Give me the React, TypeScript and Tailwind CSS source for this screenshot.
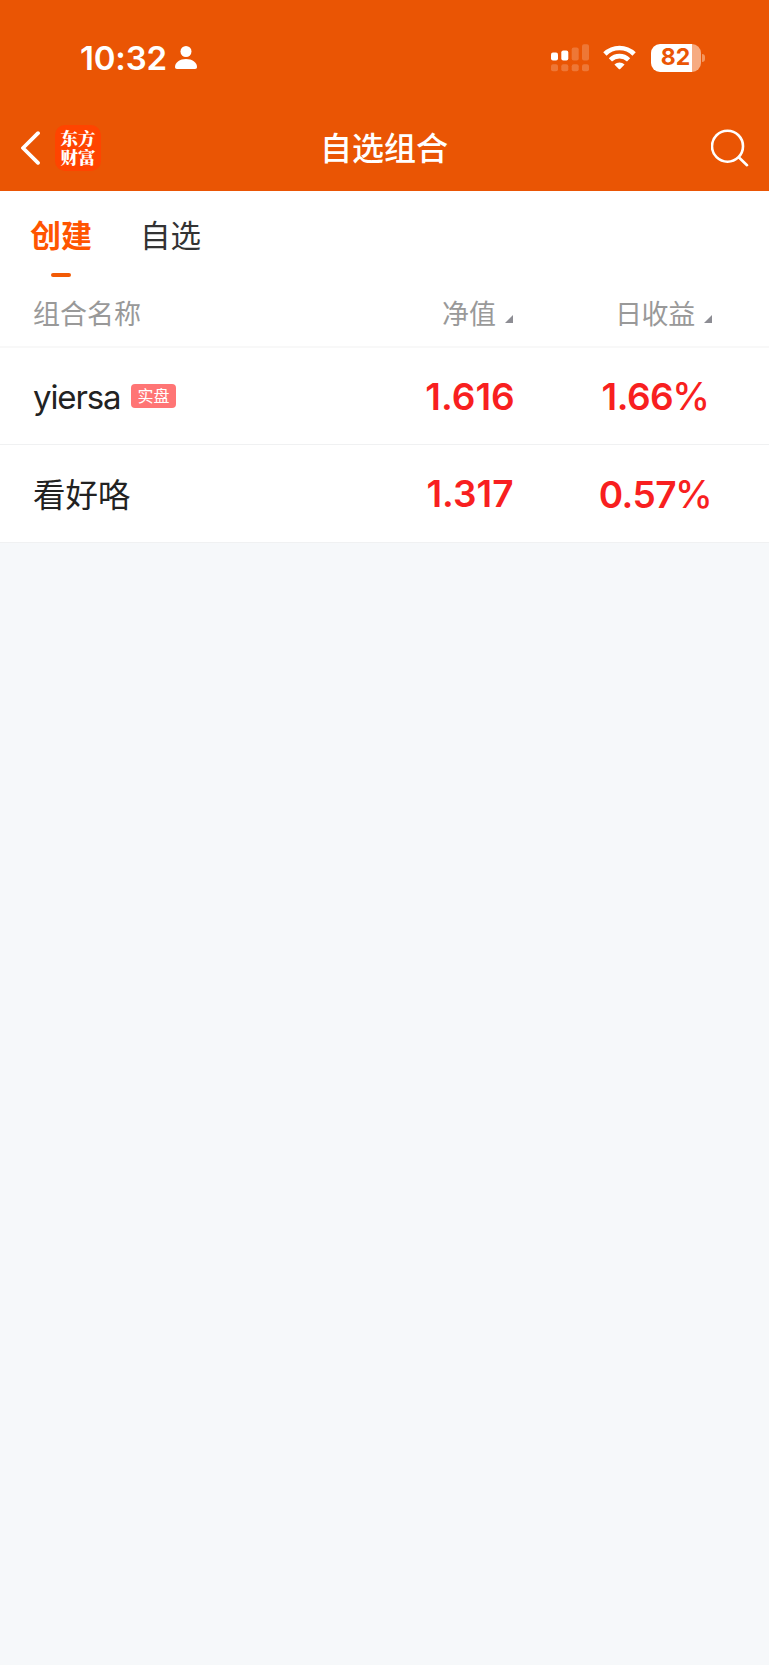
import React from 'react';

const portfolios = [
  { id: '1', name: 'yiersa', live: true, netValue: '1.616', dailyReturn: '1.66' },
  { id: '2', name: '看好咯', live: false, netValue: '1.317', dailyReturn: '0.57' },
];

function StatusBar() {
  return (
    <div className="flex h-[105px] items-center justify-between pt-[10px] pr-[64px] pl-[80px]">
      <div className="flex items-center">
        <span className="w-[95px] pt-px text-[33px] leading-none font-semibold tracking-[-0.2px] whitespace-nowrap">10:32</span>
        <svg width="22" height="24" viewBox="0 0 22 24" fill="currentColor">
          <circle cx="11" cy="5.500" r="5.500" />
          <path d="M0 21C0 16.500 5 13.100 11 13.100S22 16.500 22 21c0 1.300-.7 2-2 2H2c-1.300 0-2-.7-2-2Z" />
        </svg>
      </div>

      <div className="flex items-center">
        {/* Dual SIM signal */}
        <svg width="38" height="28" viewBox="0 0 38 28" fill="currentColor">
          <rect x="0" y="8.500" width="7" height="8" rx="2" />
          <rect x="10.300" y="6.500" width="7" height="10" rx="2" />
          <g opacity="0.2">
            <rect x="20.700" y="3.500" width="7" height="13" rx="2" />
            <rect x="31" y="0.200" width="7" height="16.300" rx="2" />
            <rect x="0" y="20.200" width="7" height="7" rx="2" />
            <rect x="10.300" y="20.200" width="7" height="7" rx="2" />
            <rect x="20.700" y="20.200" width="7" height="7" rx="2" />
            <rect x="31" y="20.200" width="7" height="7" rx="2" />
          </g>
        </svg>

        <svg className="ml-[14px]" width="33" height="25" viewBox="0 0 33 25" fill="none">
          <path d="M1.900 9C10 1 23 1 31.100 9" stroke="currentColor" strokeWidth="4.700" />
          <path d="M7.400 14.900c5.200-5.100 13-5.100 18.200 0" stroke="currentColor" strokeWidth="4.600" />
          <path d="M11.400 19.600c2.900-2.900 7.300-2.900 10.200 0l-4.400 4.300c-.5.500-.9.500-1.400 0Z" fill="currentColor" />
        </svg>

        {/* Battery */}
        <div className="ml-[15px] flex items-center gap-[1px]">
          <div className="flex h-[28px] w-[50px] items-center justify-center rounded-[9px] bg-[linear-gradient(90deg,#fff_41px,#f6ab81_41px)] pr-px">
            <span className="text-[23px] leading-none font-bold text-[#ea5504]">82</span>
          </div>
          <div className="h-[8px] w-[3px] rounded-r-full bg-[#f3965f]" />
        </div>
      </div>
    </div>
  );
}

function NavBar() {
  return (
    <div className="grid h-[86px] grid-cols-[1fr_auto_1fr] items-center pr-[20px] pl-[21px]">
      <div className="flex items-center">
        <svg width="20" height="34" viewBox="0 0 20 34" fill="none" stroke="currentColor" strokeWidth="3.800" strokeLinecap="round" strokeLinejoin="round">
          <path d="M17 2.200 2 17l15 14.800" />
        </svg>
        <div className="ml-[14px] flex h-[46px] w-[46px] items-center justify-center rounded-[10px] bg-[#ff4400] pb-[2px] font-['Noto_Serif_CJK_SC','Noto_Sans_CJK_SC',serif] text-[17.500px] leading-[19px] font-black">
          <p className="w-[35px] text-center">东方财富</p>
        </div>
      </div>
      <h1 className="relative -left-px pt-[2px] text-[32px] leading-none font-medium">自选组合</h1>
      <svg className="justify-self-end" width="38" height="38" viewBox="0 0 38 38" fill="none" stroke="currentColor" strokeWidth="2.600" strokeLinecap="round">
        <circle cx="16.500" cy="17.200" r="15.500" />
        <path d="m28 28.500 8 7.700" />
      </svg>
    </div>
  );
}

function SortMark() {
  return (
    <svg className="mb-[5px]" width="8" height="8" viewBox="0 0 8 8" fill="#8d8d94">
      <path d="M8 0v8H0Z" />
    </svg>
  );
}

export default function App() {
  return (
    <div className="min-h-[1665px] bg-[#f6f8fa] font-['Inter','Noto_Sans_CJK_SC',sans-serif] text-[#222]">
      <header className="bg-[#ea5504] text-white">
        <StatusBar />
        <NavBar />
      </header>

      <main className="bg-white">
        {/* Tabs */}
        <div className="flex h-[88px] gap-[48px] pt-[29px] pl-[30px] text-[31px] leading-[32px]">
          <div className="flex flex-col items-center font-bold text-[#ff5500]">
            <span>创建</span>
            <span className="mt-[21px] h-[4px] w-[20px] rounded-full bg-[#f25a05]" />
          </div>
          <span className="text-[30.500px] text-[#333]">自选</span>
        </div>

        {/* Column titles */}
        <div className="flex h-[69px] items-center border-b-2 border-[#f8f8f8] pt-[4px] text-[27px] leading-none text-[#999]">
          <span className="flex-1 pl-[33px]">组合名称</span>
          <div className="flex w-[170px] items-end justify-end gap-[9px]">
            <span>净值</span>
            <SortMark />
          </div>
          <div className="mr-[57px] flex w-[199px] items-end justify-end gap-[9px]">
            <span className="tracking-[-0.300px]">日收益</span>
            <SortMark />
          </div>
        </div>

        {portfolios.map((item) => (
          <div key={item.id} className="flex h-[97px] items-center border-b border-[#f0f1f2] last:h-[98px]">
            <div className="flex flex-1 items-center pl-[33px]">
              {item.live ? (
                <>
                  <span className="w-[86px] pt-[3px] text-[33px] leading-none tracking-[-1.100px]">{item.name}</span>
                  <span className="ml-[12px] flex h-[24px] w-[45px] items-center justify-center rounded-[4px] bg-[#ff7575] text-[16px] leading-none text-white">
                    实盘
                  </span>
                </>
              ) : (
                <span className="pt-[5px] text-[32.500px] leading-none">{item.name}</span>
              )}
            </div>
            <span className="w-[170px] text-center text-[37px] leading-none font-semibold text-[#f81f20]">
              {item.netValue}
            </span>
            <span className="mr-[13px] w-[201px] text-center text-[37px] leading-none font-semibold tracking-[-0.500px] text-[#f81f20]">
              {item.dailyReturn}
              <span className="-ml-px text-[38px] font-medium">%</span>
            </span>
          </div>
        ))}
      </main>
    </div>
  );
}
